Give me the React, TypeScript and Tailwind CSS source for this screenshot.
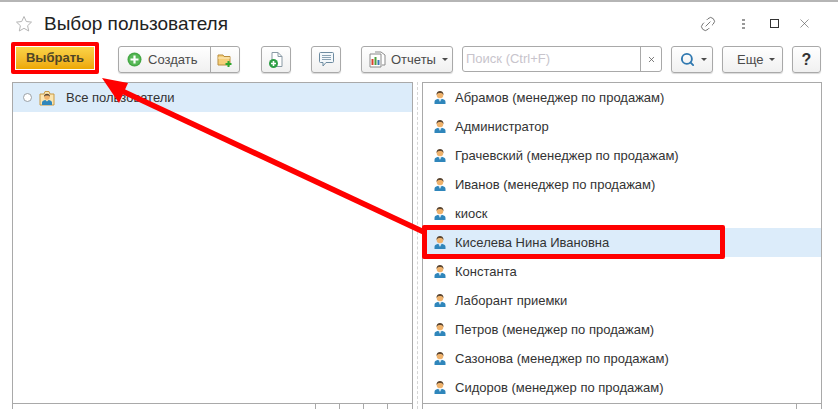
import { Search, Link2, X } from 'lucide-react';

const users = [
  'Абрамов (менеджер по продажам)',
  'Администратор',
  'Грачевский (менеджер по продажам)',
  'Иванов (менеджер по продажам)',
  'киоск',
  'Киселева Нина Ивановна',
  'Константа',
  'Лаборант приемки',
  'Петров (менеджер по продажам)',
  'Сазонова (менеджер по продажам)',
  'Сидоров (менеджер по продажам)',
];

const btn =
  'flex h-[27px] items-center rounded-[3px] border border-[#a9a9a9] bg-gradient-to-b from-white to-[#f0f0f0] text-[13px] text-[#4b4b4b] shadow-[0_1px_1px_rgba(0,0,0,0.15)]';

function Caret() {
  return <span className="ml-[6px] h-0 w-0 border-x-[3px] border-t-[3px] border-x-transparent border-t-[#4b4b4b]" />;
}

function PersonIcon() {
  return (
    <svg width="14" height="15" viewBox="0 0 14 15" className="shrink-0">
      <path d="M1.500 14v-2.200C1.500 10 3.500 9.400 5.200 8.800L7 10.400l1.800-1.600c1.700.6 3.700 1.200 3.700 3V14z" fill="#2f86bb" />
      <path d="M5.600 9L7 12l1.400-3z" fill="#d6e8f2" />
      <circle cx="7" cy="5" r="3.300" fill="#efb26c" />
      <path d="M3.500 5.200C3.200 2.600 5 1 7 1s3.800 1.600 3.500 4.200C10 3.600 8.800 3 7 3s-3 .6-3.500 2.200z" fill="#5a4632" />
    </svg>
  );
}

function GroupIcon() {
  return (
    <svg width="16" height="16" viewBox="0 0 16 16">
      <path d="M1 4h4l1-2.500h4L11 4h4v11H1z" fill="#fbe5b0" stroke="#c99a45" />
      <path d="M3 15v-2.400C3 11 5 10.400 6.400 10L8 11.400 9.600 10c1.400.4 3.400 1 3.400 2.600V15z" fill="#2f86bb" />
      <circle cx="8" cy="7" r="2.800" fill="#efb26c" />
      <path d="M5 7c-.2-2.200 1.300-3.200 3-3.200S11.200 4.800 11 7c-.5-1.200-1.500-1.600-3-1.600S5.500 5.800 5 7z" fill="#5a4632" />
    </svg>
  );
}

function PlusCircle() {
  return (
    <svg width="15" height="15" viewBox="0 0 15 15">
      <circle cx="7.500" cy="7.500" r="7" fill="#45a845" />
      <circle cx="7.500" cy="7.500" r="5.600" fill="#58b958" />
      <path d="M7.500 3.500v8M3.500 7.500h8" stroke="#fff" strokeWidth="2.200" />
    </svg>
  );
}

function FolderPlus() {
  return (
    <svg width="16" height="16" viewBox="0 0 16 16">
      <path d="M1 3h5l1 1.500h6V13H1z" fill="#f6cf7a" stroke="#b98d3c" />
      <path d="M1 6h12" stroke="#fdeec6" />
      <path d="M11.500 9v6M8.500 12h6" stroke="#2ea62e" strokeWidth="2" />
    </svg>
  );
}

function DocPlus() {
  return (
    <svg width="18" height="18" viewBox="0 0 18 18">
      <path d="M5 1.500h6l4 4v10H5z" fill="#fff" stroke="#8a9aa5" />
      <path d="M11 1.500v4h4" fill="none" stroke="#8a9aa5" />
      <circle cx="6.500" cy="12.500" r="4.500" fill="#2e9e45" />
      <path d="M6.500 10v5M4 12.500h5" stroke="#fff" strokeWidth="1.600" />
    </svg>
  );
}

function CommentIcon() {
  return (
    <svg width="17" height="17" viewBox="0 0 17 17" fill="none">
      <path d="M1.500 2.500q0-1 1-1h12q1 0 1 1v8q0 1-1 1H8l-3 3.500v-3.500H2.500q-1 0-1-1z" fill="#f4f8fb" stroke="#6d8ba0" />
      <path d="M4 4.500h9M4 6.500h9M4 8.500h9" stroke="#8aa2b3" />
    </svg>
  );
}

function ReportIcon() {
  return (
    <svg width="17" height="17" viewBox="0 0 17 17" fill="none">
      <path d="M6 1h6l4 3v10h-3" fill="#fff" stroke="#8a8a8a" />
      <path d="M1 3h11v13H1z" fill="#fff" stroke="#8a8a8a" />
      <path d="M3.500 8v6" stroke="#d9402e" strokeWidth="2" />
      <path d="M6.500 6v8" stroke="#4f9f3f" strokeWidth="2" />
      <path d="M9.500 9v5" stroke="#3a78b5" strokeWidth="2" />
    </svg>
  );
}

function TopIcons() {
  return (
    <div className="flex items-center text-[#555]">
      <Link2 size={18} strokeWidth={1} className="-rotate-45" />
      <span className="ml-[25px] flex flex-col gap-[2px]">
        <span className="h-[2px] w-[3px] bg-[#999]" />
        <span className="h-[2px] w-[3px] bg-[#999]" />
        <span className="h-[2px] w-[3px] bg-[#999]" />
      </span>
      <span className="ml-[25px] h-[9px] w-[9px] border border-[#333]" />
      <X size={15} strokeWidth={1} className="ml-[18px]" />
    </div>
  );
}

export default function App() {
  return (
    <div className="relative h-[409px] w-[838px] overflow-hidden bg-white font-['Liberation_Sans',Arial,sans-serif]">
      <div className="h-[3px] border-t-2 border-[#b5b5b5]" />

      {/* header */}
      <div className="flex h-[41px] items-center pr-[26px] pl-[15px]">
        <svg width="18" height="18" viewBox="0 0 18 18" fill="none">
          <path d="M9 1.500l2.300 5 5.200.6-3.900 3.600 1.100 5.300L9 13.300 4.300 16l1.100-5.300L1.500 7.100l5.200-.6z" stroke="#b5b5b5" />
        </svg>
        <h1 className="ml-[11px] text-[19px] leading-none text-[#222]">Выбор пользователя</h1>
        <div className="ml-auto">
          <TopIcons />
        </div>
      </div>

      {/* toolbar */}
      <div className="flex h-[38px] items-start pt-[2px] pl-[16px]">
        <div className="mt-[1px] flex h-[22px] w-[78px] items-center justify-center bg-gradient-to-b from-[#fbd446] to-[#eda800] text-[13px] font-bold text-[#4f4526]">
          Выбрать
        </div>
        <div className={`${btn} ml-[24px] w-[122px]`}>
          <span className="ml-[8px]"><PlusCircle /></span>
          <span className="ml-[6px]">Создать</span>
          <span className="ml-auto flex h-full w-[29px] items-center justify-center border-l border-[#a9a9a9]">
            <FolderPlus />
          </span>
        </div>
        <div className={`${btn} ml-[21px] w-[30px] justify-center`}><DocPlus /></div>
        <div className={`${btn} ml-[20px] w-[30px] justify-center`}><CommentIcon /></div>
        <div className={`${btn} ml-[20px] w-[92px] pl-[7px]`}>
          <ReportIcon />
          <span className="ml-[5px]">Отчеты</span>
          <Caret />
        </div>
        <div className="ml-[9px] flex h-[26px] w-[200px] items-center rounded-[3px] border border-[#a9a9a9] text-[13px] text-[#c8c4cc]">
          <span className="pl-[3px]">Поиск (Ctrl+F)</span>
          <span className="ml-auto flex h-full w-[21px] items-center justify-center border-l border-[#a9a9a9]">
            <X size={9} className="text-[#555]" />
          </span>
        </div>
        <div className={`${btn} ml-[9px] w-[42px] pl-[8px]`}>
          <Search size={15} strokeWidth={3} className="text-[#2f78b0]" />
          <Caret />
        </div>
        <div className={`${btn} ml-[9px] w-[61px] pl-[14px]`}>
          Еще
          <Caret />
        </div>
        <div className={`${btn} ml-[9px] w-[29px] justify-center text-[16px] font-bold text-[#333]`}>?</div>
      </div>

      {/* panels */}
      <div className="flex h-[327px] pl-[12px]">
        <div className="relative w-[401px] border-x border-t border-[#a9a9a9]">
          <div className="flex h-[29px] items-center bg-[#dcecfa] pl-[10px] text-[13px] text-[#333]">
            <span className="h-[9px] w-[9px] rounded-full border border-[#9aa0a6] bg-white" />
            <span className="ml-[7px]"><GroupIcon /></span>
            <span className="ml-[11px]">Все пользователи</span>
          </div>
          <div className="absolute top-[320px] right-0 left-0 border-t border-[#a9a9a9]">
            <div className="flex justify-end pr-[1px]">
              {[0, 1, 2, 3].map((i) => (
                <div key={i} className="h-[6px] w-[24px] border-l border-[#a9a9a9]" />
              ))}
            </div>
          </div>
        </div>
        <div className="ml-[4px] w-0 border-l border-dashed border-[#d5d5d5]" />
        <div className="relative ml-[4px] w-[400px] border-x border-t border-[#a9a9a9]">
          {users.map((name) => (
            <div
              key={name}
              className={`flex h-[29px] items-center pl-[10px] text-[13px] text-[#333] ${
                name === 'Киселева Нина Ивановна' ? 'bg-[#dcecfa]' : ''
              }`}
            >
              <PersonIcon />
              <span className="ml-[8px]">{name}</span>
            </div>
          ))}
          <div className="absolute top-[320px] right-0 left-0 flex justify-end border-t border-[#a9a9a9] pr-[1px]">
            <div className="h-[6px] w-[24px] border-l border-[#a9a9a9]" />
          </div>
        </div>
      </div>

      {/* red annotations */}
      <div className="absolute top-[42px] left-[11px] h-[32px] w-[88px] rounded-[2px] border-[4px] border-[#ff0000]" />
      <div className="absolute top-[225px] left-[422px] h-[34px] w-[303px] rounded-[2px] border-[5px] border-[#ff0000]" />
      <svg width="838" height="409" className="absolute top-0 left-0">
        <path d="M426 233L122 91" stroke="#ff0000" strokeWidth="5.500" />
        <path d="M102 78L128 83L119 103z" fill="#ff0000" />
      </svg>
    </div>
  );
}
